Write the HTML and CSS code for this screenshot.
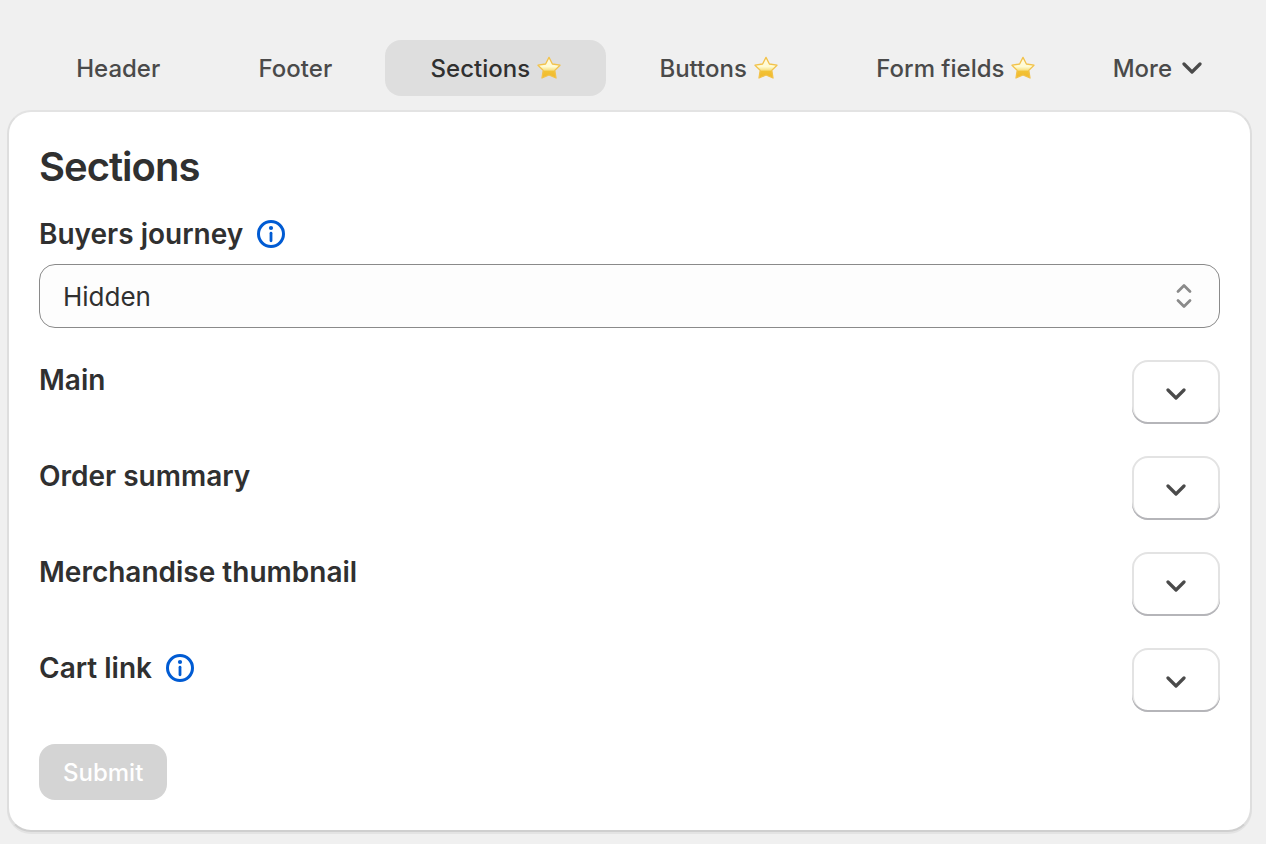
FILE: index.html
```html
<!DOCTYPE html>
<html lang="en">
<head>
<meta charset="UTF-8">
<meta name="viewport" content="width=device-width, initial-scale=1.0">
<title>Sections</title>
<link rel="stylesheet" href="styles.css">
</head>
<body>

<!-- shared icons -->
<svg class="sprite" aria-hidden="true">
  <defs>
    <linearGradient id="star-fill" x1="0" y1="0" x2="0" y2="1">
      <stop offset="0" stop-color="#fffbe0"/>
      <stop offset="0.45" stop-color="#fffbd2"/>
      <stop offset="0.6" stop-color="#f8e48c"/>
      <stop offset="0.68" stop-color="#f2c235"/>
      <stop offset="1" stop-color="#f1b92c"/>
    </linearGradient>
  </defs>
  <symbol id="star" viewBox="0 0 24 24">
    <path d="M12 1.4 L15.4 8 L23 9.2 L17.8 14.4 L19 22 L12 19 L5 22 L6.2 14.4 L1 9.2 L8.6 8 Z" fill="url(#star-fill)" stroke="#f2c24a" stroke-width="1.3" stroke-linejoin="round"/>
  </symbol>
  <symbol id="chevron" viewBox="0 0 20 12">
    <path d="M2 2 L10 10 L18 2" fill="none" stroke="currentColor" stroke-width="3.2" stroke-linecap="round" stroke-linejoin="round"/>
  </symbol>
  <symbol id="info" viewBox="0 0 28 28">
    <circle cx="14" cy="14" r="12.5" fill="none" stroke="currentColor" stroke-width="3"/>
    <circle cx="14" cy="8" r="2.1" fill="currentColor"/>
    <path d="M14 13.2 V20.8" fill="none" stroke="currentColor" stroke-width="2.8" stroke-linecap="round"/>
  </symbol>
</svg>

<nav class="tabs">
  <button type="button" class="tab">Header</button>
  <button type="button" class="tab">Footer</button>
  <button type="button" class="tab tab-active">Sections <svg class="star"><use href="#star"/></svg></button>
  <button type="button" class="tab">Buttons <svg class="star"><use href="#star"/></svg></button>
  <button type="button" class="tab">Form fields <svg class="star"><use href="#star"/></svg></button>
  <button type="button" class="tab tab-more">More <svg class="chevron"><use href="#chevron"/></svg></button>
</nav>

<form class="card">
  <h1 class="title">Sections</h1>

  <div class="field">
    <div class="label-row">
      <label for="buyers-journey" class="label">Buyers journey</label>
      <svg class="info"><use href="#info"/></svg>
    </div>
    <div class="select-wrap">
      <select id="buyers-journey" class="select">
        <option>Hidden</option>
      </select>
      <svg class="select-icon" viewBox="0 0 16 26">
        <path d="M2 8.5 L8 2.5 L14 8.5 M2 17.5 L8 23.5 L14 17.5" fill="none" stroke="#8a8a8a" stroke-width="2.8" stroke-linecap="round" stroke-linejoin="round"/>
      </svg>
    </div>
  </div>

  <div class="row">
    <h2 class="label" id="main">Main</h2>
    <button type="button" class="toggle" aria-labelledby="main"><svg class="chevron"><use href="#chevron"/></svg></button>
  </div>

  <div class="row">
    <h2 class="label" id="order-summary">Order summary</h2>
    <button type="button" class="toggle" aria-labelledby="order-summary"><svg class="chevron"><use href="#chevron"/></svg></button>
  </div>

  <div class="row">
    <h2 class="label" id="thumbnail">Merchandise thumbnail</h2>
    <button type="button" class="toggle" aria-labelledby="thumbnail"><svg class="chevron"><use href="#chevron"/></svg></button>
  </div>

  <div class="row">
    <div class="label-row">
      <h2 class="label" id="cart-link">Cart link</h2>
      <svg class="info"><use href="#info"/></svg>
    </div>
    <button type="button" class="toggle" aria-labelledby="cart-link"><svg class="chevron"><use href="#chevron"/></svg></button>
  </div>

  <button type="submit" class="submit" disabled>Submit</button>
</form>

</body>
</html>
```

FILE: styles.css
```css
* {
  box-sizing: border-box;
}
body {
  margin: 0;
  padding: 40px 14px 12px 7px;
  background: #f0f0f0;
  color: #303030;
  font-family: Inter, "Liberation Sans", sans-serif;
}
button,
select {
  font-family: inherit;
  cursor: pointer;
}
.sprite {
  position: absolute;
  width: 0;
  height: 0;
}

/* tabs */
.tabs {
  display: flex;
  gap: 8px;
  padding: 0 26px 0 24px;
  margin-bottom: 14px;
}
.tab {
  flex: 1 1 auto;
  display: flex;
  align-items: center;
  justify-content: center;
  gap: 7px;
  height: 56px;
  padding: 0 24px;
  border: none;
  border-radius: 16px;
  background: transparent;
  color: #4a4a4a;
  font-size: 24px;
  font-weight: 500;
  font-optical-sizing: none;
  white-space: nowrap;
}
.tab-active {
  background: #dedede;
  color: #303030;
}
.tab-more {
  flex-grow: 0;
  gap: 10px;
}
.star {
  width: 24px;
  height: 24px;
}
.chevron {
  width: 20px;
  height: 12px;
  color: #4a4a4a;
}

/* card */
.card {
  display: flex;
  flex-direction: column;
  gap: 32px;
  padding: 30px;
  border: 2px solid #dedede;
  border-top-color: #e3e3e3;
  border-bottom-color: #cfcfcf;
  border-radius: 24px;
  background: #fff;
  box-shadow: 0 2px 0 #e3e3e3;
}
.title {
  margin: 0 0 -10px;
  font-size: 40px;
  font-weight: 600;
  line-height: 50px;
  letter-spacing: -1px;
}
.label {
  margin: 0;
  font-size: 28px;
  font-weight: 600;
  line-height: 40px;
}
.label-row {
  display: flex;
  align-items: center;
  gap: 14px;
}
.info {
  width: 28px;
  height: 28px;
  color: #005bd3;
}
.field {
  display: flex;
  flex-direction: column;
  gap: 10px;
}
.select-wrap {
  position: relative;
}
.select {
  -webkit-appearance: none;
  appearance: none;
  display: block;
  width: 100%;
  height: 64px;
  padding: 0 60px 0 23px;
  border: 1px solid #8a8a8a;
  border-radius: 16px;
  background: #fdfdfd;
  color: #303030;
  font-size: 26px;
}
.select-icon {
  position: absolute;
  top: 19px;
  right: 28px;
  width: 16px;
  height: 26px;
  pointer-events: none;
}
.row {
  display: flex;
  align-items: flex-start;
  justify-content: space-between;
}
.toggle {
  display: flex;
  align-items: center;
  justify-content: center;
  width: 88px;
  height: 64px;
  padding: 4px 0 0;
  border: none;
  border-radius: 16px;
  background: #fff;
  box-shadow: inset 0 -2px 0 #b5b5b9, inset 0 0 0 2px #e3e3e3;
}
.submit {
  align-self: flex-start;
  height: 56px;
  padding: 0 24px;
  border: none;
  border-radius: 16px;
  background: #d4d4d4;
  color: #fff;
  font-size: 24px;
  font-weight: 500;
  font-optical-sizing: none;
  cursor: default;
}
```
